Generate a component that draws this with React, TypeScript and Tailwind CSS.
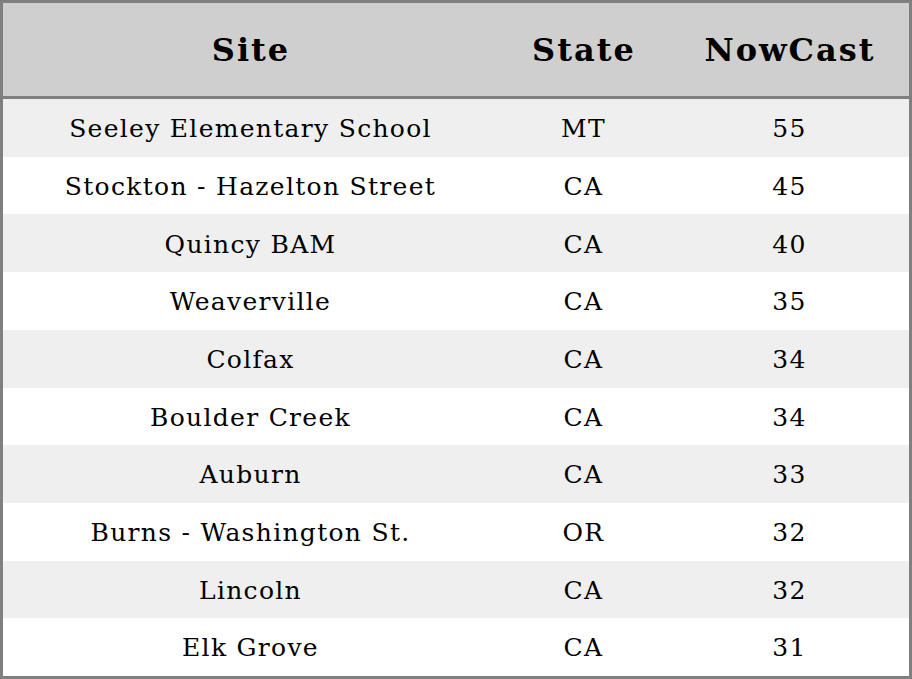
const rows = [
  { site: "Seeley Elementary School", state: "MT", nowcast: 55 },
  { site: "Stockton - Hazelton Street", state: "CA", nowcast: 45 },
  { site: "Quincy BAM", state: "CA", nowcast: 40 },
  { site: "Weaverville", state: "CA", nowcast: 35 },
  { site: "Colfax", state: "CA", nowcast: 34 },
  { site: "Boulder Creek", state: "CA", nowcast: 34 },
  { site: "Auburn", state: "CA", nowcast: 33 },
  { site: "Burns - Washington St.", state: "OR", nowcast: 32 },
  { site: "Lincoln", state: "CA", nowcast: 32 },
  { site: "Elk Grove", state: "CA", nowcast: 31 },
];

export default function App() {
  return (
    <div
      className="w-[912px] h-[679px] border-[3px] border-[#808080] bg-white text-black flex flex-col"
      style={{ fontFamily: '"DejaVu Serif", serif' }}
    >
      {/* header */}
      <div className="grid grid-cols-[494px_172px_240px] h-[96px] shrink-0 bg-[#cfcfcf] border-b-[3px] border-[#808080] text-[32px] font-bold tracking-[2px]">
        <div className="flex items-center justify-center pl-[2px]">Site</div>
        <div className="flex items-center justify-center pl-[2px]">State</div>
        <div className="flex items-center justify-center pl-[2px]">NowCast</div>
      </div>

      {/* body */}
      <div className="flex-1 flex flex-col">
        {rows.map((r, i) => (
          <div
            key={r.site}
            className={`flex-1 grid grid-cols-[494px_172px_240px] text-[25px] tracking-[1.3px] ${
              i % 2 === 0 ? "bg-[#efefef]" : "bg-white"
            }`}
          >
            <div className="flex items-center justify-center pl-[1px] pt-[2px]">{r.site}</div>
            <div className="flex items-center justify-center pl-[1px] pt-[2px]">{r.state}</div>
            <div className="flex items-center justify-center pl-[1px] pt-[2px]">{r.nowcast}</div>
          </div>
        ))}
      </div>
    </div>
  );
}
